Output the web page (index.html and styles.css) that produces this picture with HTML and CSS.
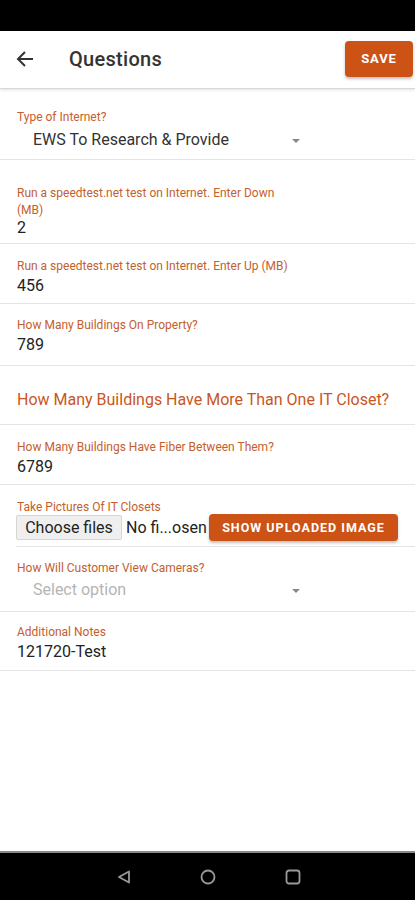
FILE: index.html
```html
<!DOCTYPE html>
<html>
<head>
<meta charset="utf-8">
<link rel="stylesheet" href="styles.css">
</head>
<body>
<div class="screen">
  <div class="statusbar"></div>
  <header class="appbar">
    <svg class="back" width="20" height="20" viewBox="0 0 20 20"><path d="M18 10H3M10 3L3 10L10 17" fill="none" stroke="#333" stroke-width="2"/></svg>
    <h1 class="title">Questions</h1>
    <button class="btn save">SAVE</button>
  </header>
  <main class="form">
    <div class="field f-select1">
      <div class="label">Type of Internet?</div>
      <div class="select"><span class="select-value">EWS To Research &amp; Provide</span><span class="caret"></span></div>
    </div>
    <div class="field f-two">
      <div class="label wrap">Run a speedtest.net test on Internet. Enter Down (MB)</div>
      <div class="value">2</div>
    </div>
    <div class="field">
      <div class="label">Run a speedtest.net test on Internet. Enter Up (MB)</div>
      <div class="value">456</div>
    </div>
    <div class="field f-b">
      <div class="label">How Many Buildings On Property?</div>
      <div class="value">789</div>
    </div>
    <div class="field heading-row">
      <div class="heading">How Many Buildings Have More Than One IT Closet?</div>
    </div>
    <div class="field">
      <div class="label">How Many Buildings Have Fiber Between Them?</div>
      <div class="value">6789</div>
    </div>
    <div class="field f-file">
      <div class="label">Take Pictures Of IT Closets</div>
      <div class="filerow">
        <span class="choose">Choose files</span>
        <span class="nofile">No fi...osen</span>
        <button class="btn show">SHOW UPLOADED IMAGE</button>
      </div>
    </div>
    <div class="field f-select2">
      <div class="label">How Will Customer View Cameras?</div>
      <div class="select"><span class="select-value placeholder">Select option</span><span class="caret"></span></div>
    </div>
    <div class="field f-notes">
      <div class="label">Additional Notes</div>
      <div class="value">121720-Test</div>
    </div>
  </main>
  <nav class="navbar">
    <svg width="16" height="16" viewBox="0 0 16 16"><path d="M13 2.5V13.5L3 8Z" fill="none" stroke="#9a9a9a" stroke-width="1.8" stroke-linejoin="round"/></svg>
    <svg width="18" height="18" viewBox="0 0 18 18"><circle cx="9" cy="9" r="6.5" fill="none" stroke="#9a9a9a" stroke-width="1.8"/></svg>
    <svg width="18" height="18" viewBox="0 0 18 18"><rect x="2.5" y="2.5" width="13" height="13" rx="2.5" fill="none" stroke="#9a9a9a" stroke-width="1.8"/></svg>
  </nav>
</div>
</body>
</html>
```
FILE: styles.css
```css
* { box-sizing: border-box; }
html, body { margin: 0; padding: 0; }
body { font-family: Roboto, "Liberation Sans", sans-serif; background: #fff; color: #222; }
.screen { width: 415px; height: 900px; display: flex; flex-direction: column; overflow: hidden; }
.statusbar { height: 31px; background: #000; flex: none; }
.appbar {
  height: 58px; flex: none; display: flex; align-items: center;
  padding: 0 2px 0 15px; border-bottom: 1px solid #d8d8d8;
  box-shadow: 0 1px 3px rgba(0,0,0,0.12);
  position: relative; z-index: 1;
}
.back { flex: none; margin-top: -2px; }
.title { margin: 0 0 0 34px; font-size: 20px; font-weight: 500; color: #333; flex: 1; letter-spacing: 0.3px; margin-top: -1px; }
.btn {
  border: none; background: #cc5216; color: #fff; font-family: Roboto, "Liberation Sans", sans-serif;
  font-weight: 700; border-radius: 4px; box-shadow: 0 2px 3px rgba(0,0,0,0.25); padding: 0;
}
.save { width: 68px; height: 36px; font-size: 13px; letter-spacing: 0.9px; margin-top: -2px; }
.form { flex: 1; display: flex; flex-direction: column; }
.field {
  border-bottom: 1.5px solid #e4e4e4; padding: 15px 16px 0 17px; height: 60px;
  display: flex; flex-direction: column;
}
.label { font-size: 12px; line-height: 14px; color: #c4602e; height: 14px; white-space: nowrap; }
.label.wrap { height: auto; line-height: 17px; width: 272px; white-space: normal; }
.value { margin-top: 3px; font-size: 16px; line-height: 20px; color: #222; }
.f-select1 { height: 71px; padding-top: 21px; }
.select { display: flex; align-items: center; margin-top: 5px; padding-left: 16px; width: 283px; }
.select-value { font-size: 16px; line-height: 22px; color: #333; flex: 1; }
.select-value.placeholder { color: #b5b5b5; }
.caret { width: 0; height: 0; border-left: 4.5px solid transparent; border-right: 4.5px solid transparent; border-top: 4.5px solid #888; margin-top: 1px; }
.f-two { height: 84px; padding-top: 25px; }
.f-two .value { margin-top: 0; line-height: 18px; }
.f-b { height: 62px; padding-top: 14px; }
.heading-row { height: 59px; justify-content: flex-start; padding-top: 24px; }
.heading { font-size: 16px; line-height: 20px; color: #c9561e; }
.f-file { height: 62px; padding-top: 15px; padding-left: 16px; padding-right: 0; border-bottom: none; position: relative; }
.f-file::after { content: ""; position: absolute; left: 16px; right: 0; bottom: 0; border-bottom: 1.5px solid #e4e4e4; }
.f-file .label { padding-left: 1px; }
.filerow { display: flex; align-items: center; margin-top: 0; }
.choose {
  height: 25px; width: 106px; background: #efefef; border: 1px solid #d6d6d6; border-radius: 2px;
  font-size: 16px; line-height: 23px; text-align: center; color: #222;
}
.nofile { font-size: 16px; margin-left: 4px; color: #222; width: 81px; }
.show { height: 27px; width: 189px; font-size: 12.5px; letter-spacing: 1px; margin-left: 2px; }
.f-select2 { height: 65px; padding-top: 14px; }
.f-select2 .select { margin-top: 4px; }
.f-notes { height: 59px; padding-top: 13px; }
.navbar {
  height: 49px; flex: none; background: #000; border-top: 2px solid #8a8a8a;
  display: flex; align-items: center; justify-content: center; gap: 67px; padding-left: 2px;
}
```
